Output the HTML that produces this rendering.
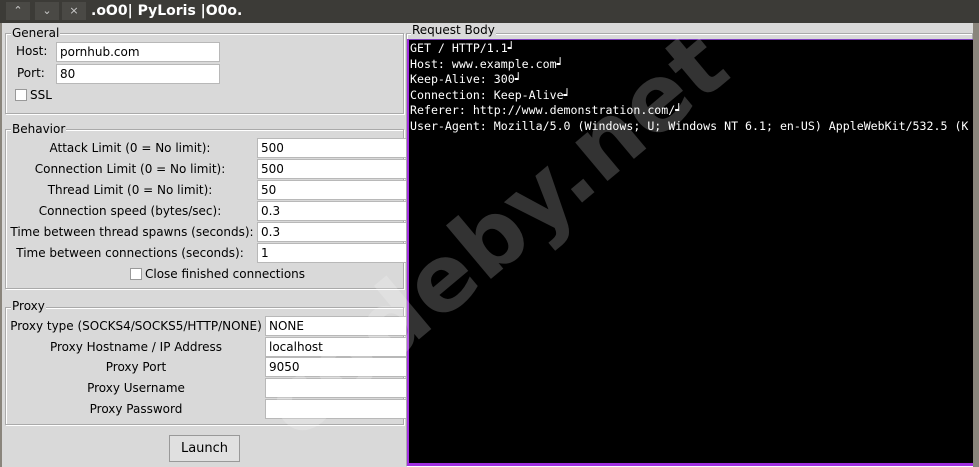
<!DOCTYPE html>
<html><head><style>
*{margin:0;padding:0;box-sizing:border-box}
html,body{width:979px;height:467px;overflow:hidden}
body{background:#d9d9d9;font-family:"DejaVu Sans",sans-serif;font-size:12px;color:#000}
#w{position:relative;width:979px;height:467px;overflow:hidden}
.a{position:absolute;white-space:nowrap}
.tb{left:0;top:0;width:979px;height:23px;background:#3c3b37}
.btn{top:2px;width:24px;height:18px;background:#4a4945;color:#ccc;font-size:11px;text-align:center;line-height:18px}
.fr{border:1px solid #aaa;box-shadow:inset 1px 1px 0 #fff,1px 1px 0 #fff}
.lg{background:#d9d9d9;padding:0 1px;font-size:12px;line-height:13px}
.en{background:#fff;border:1px solid #b8b8b8;border-right:none;height:20px;line-height:18px;padding-left:3px}
.lb{text-align:center;line-height:20px}
.mono{font-family:"DejaVu Sans Mono",monospace;color:#fff;font-size:11.6px;line-height:15.5px}
.cb{width:12px;height:12px;background:#fff;border:1px solid #999}
</style></head><body><div id="w">
<div class="a tb"></div>
<div class="a btn" style="left:6px">&#8963;</div>
<div class="a btn" style="left:35px">&#8964;</div>
<div class="a btn" style="left:62px">&#215;</div>
<div class="a" style="left:91px;top:3px;color:#fff;font-weight:bold;font-size:14px">.oO0| PyLoris |O0o.</div>

<div class="a fr" style="left:5px;top:33px;width:399px;height:81px"></div>
<div class="a lg" style="left:11px;top:27px">General</div>
<div class="a" style="left:16px;top:44px">Host:</div>
<div class="a en" style="left:56px;top:42px;width:164px;border-right:1px solid #b8b8b8">pornhub.com</div>
<div class="a" style="left:17px;top:66px">Port:</div>
<div class="a en" style="left:56px;top:64px;width:164px;border-right:1px solid #b8b8b8">80</div>
<div class="a cb" style="left:15px;top:89px"></div>
<div class="a" style="left:30px;top:88px">SSL</div>

<div class="a fr" style="left:5px;top:129px;width:399px;height:160px"></div>
<div class="a lg" style="left:11px;top:123px">Behavior</div>
<div class="a lb" style="left:5px;top:138px;width:250px">Attack Limit (0 = No limit):</div>
<div class="a lb" style="left:5px;top:159px;width:250px">Connection Limit (0 = No limit):</div>
<div class="a lb" style="left:5px;top:180px;width:250px">Thread Limit (0 = No limit):</div>
<div class="a lb" style="left:5px;top:201px;width:250px">Connection speed (bytes/sec):</div>
<div class="a lb" style="left:7px;top:222px;width:250px">Time between thread spawns (seconds):</div>
<div class="a lb" style="left:5px;top:243px;width:250px">Time between connections (seconds):</div>
<div class="a en" style="left:257px;top:138px;width:149px">500</div>
<div class="a en" style="left:257px;top:159px;width:149px">500</div>
<div class="a en" style="left:257px;top:180px;width:149px">50</div>
<div class="a en" style="left:257px;top:201px;width:149px">0.3</div>
<div class="a en" style="left:257px;top:222px;width:149px">0.3</div>
<div class="a en" style="left:257px;top:243px;width:149px">1</div>
<div class="a cb" style="left:130px;top:268px"></div>
<div class="a" style="left:145px;top:267px">Close finished connections</div>

<div class="a fr" style="left:5px;top:307px;width:399px;height:118px"></div>
<div class="a lg" style="left:11px;top:300px">Proxy</div>
<div class="a lb" style="left:9px;top:316px;width:254px">Proxy type (SOCKS4/SOCKS5/HTTP/NONE)</div>
<div class="a lb" style="left:9px;top:337px;width:254px">Proxy Hostname / IP Address</div>
<div class="a lb" style="left:9px;top:357px;width:254px">Proxy Port</div>
<div class="a lb" style="left:9px;top:378px;width:254px">Proxy Username</div>
<div class="a lb" style="left:9px;top:399px;width:254px">Proxy Password</div>
<div class="a en" style="left:265px;top:316px;width:141px">NONE</div>
<div class="a en" style="left:265px;top:337px;width:141px">localhost</div>
<div class="a en" style="left:265px;top:357px;width:141px">9050</div>
<div class="a en" style="left:265px;top:378px;width:141px"></div>
<div class="a en" style="left:265px;top:399px;width:141px"></div>
<div class="a" style="left:169px;top:435px;width:71px;height:27px;border:1px solid #999;background:#e0e0e0;text-align:center;line-height:25px;font-size:13px">Launch</div>

<div class="a fr" style="left:406px;top:33px;width:567px;height:433px"></div>
<div class="a lg" style="left:411px;top:24px">Request Body</div>
<div class="a" style="left:407px;top:39px;width:567px;height:427px;background:#000;border:1px solid #888;border-bottom:3px solid #a030e0;border-left:2px solid #a030e0;border-top:1px solid #8040c0"></div>
<div class="a mono" style="left:410px;top:41px">GET / HTTP/1.1&#9497;<br>Host: www.example.com&#9497;<br>Keep-Alive: 300&#9497;<br>Connection: Keep-Alive&#9497;<br>Referer: http://www.demonstration.com/&#9497;<br>User-Agent: Mozilla/5.0 (Windows; U; Windows NT 6.1; en-US) AppleWebKit/532.5 (K</div>
<div class="a" style="left:973px;top:23px;width:6px;height:444px;background:#8a857c"></div>
<div class="a" style="left:0;top:23px;width:2px;height:444px;background:#8a857c"></div>

<div class="a" style="left:165px;top:180px;width:660px;height:110px;line-height:110px;font-size:92px;font-weight:bold;color:rgba(255,255,255,0.2);transform:rotate(-40deg);font-family:'DejaVu Sans',sans-serif;text-align:center">codeby.net</div>
</div></body></html>
